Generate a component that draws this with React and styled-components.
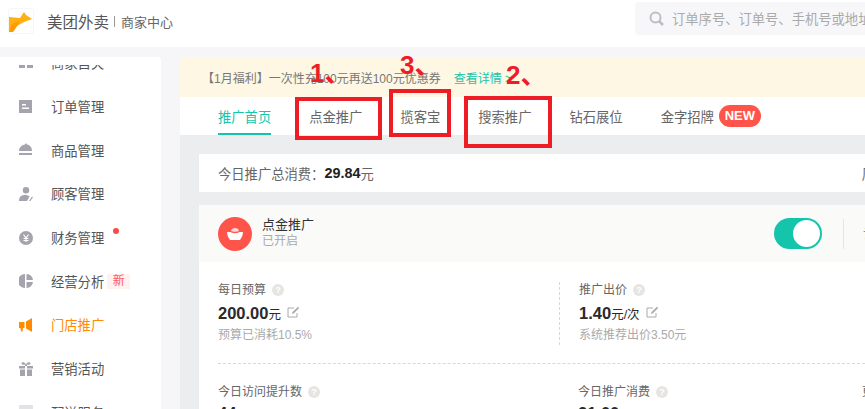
import React from 'react';
import styled, { createGlobalStyle } from 'styled-components';

const GlobalStyle = createGlobalStyle`
  html, body {
    margin: 0;
    padding: 0;
    height: 409px;
    overflow: hidden;
    background: #f6f6f8;
    font-family: "Liberation Sans", "Noto Sans CJK SC", sans-serif;
  }
`;

const Page = styled.div`
  position: relative;
  width: 865px;
  height: 409px;
  overflow: hidden;
`;

const Header = styled.header`
  display: flex;
  align-items: center;
  height: 47px;
  background: #fff;
  padding-left: 9px;
  box-sizing: border-box;
`;

const Logo = styled.div`
  width: 24px;
  height: 24px;
  margin-top: -6px;
  border-radius: 2px;
  box-shadow: 0 0 2px #ddd;
  display: flex;
`;

const Brand = styled.span`
  margin-left: 14px;
  font-size: 15.5px;
  color: #555;
  margin-top: -5px;
`;

const BrandSub = styled.span`
  margin-left: 5px;
  padding-left: 7px;
  font-size: 13px;
  color: #666;
  margin-top: -5px;
  position: relative;
  &::before {
    content: '';
    position: absolute;
    left: 0;
    top: 4px;
    height: 11px;
    border-left: 1px solid #999;
  }
`;

const Search = styled.div`
  margin-left: auto;
  width: 230px;
  height: 33px;
  margin-top: -11px;
  background: #f7f7f9;
  border-radius: 3px 0 0 3px;
  display: flex;
  align-items: center;
  padding-left: 14px;
  box-sizing: border-box;
  color: #aaa;
  font-size: 13.3px;
  white-space: nowrap;
  overflow: hidden;
  gap: 8px;
  flex-shrink: 0;
`;

const Body = styled.div`
  display: flex;
  padding-top: 10px;
`;

const Sidebar = styled.nav`
  width: 161px;
  height: 352px;
  padding-top: 8px;
  box-sizing: border-box;
  background: #fff;
  border-top-right-radius: 3px;
  flex-shrink: 0;
`;

const MenuScroll = styled.div`
  height: 100%;
  overflow: hidden;
`;

const MenuList = styled.div`
  margin-top: -24px;
  padding-left: 19px;
`;

const MenuItem = styled.div`
  display: flex;
  align-items: center;
  height: 43.7px;
  font-size: 13.3px;
  color: ${(p) => (p.$active ? '#ff8c00' : '#555')};
`;

const MenuIcon = styled.span`
  width: 14px;
  height: 14px;
  margin-right: 18px;
  display: flex;
  align-items: center;
  justify-content: center;
  color: ${(p) => (p.$active ? '#ff8c00' : '#a5a3ad')};
`;

const Dot = styled.span`
  width: 6px;
  height: 6px;
  border-radius: 50%;
  background: #fa4a4a;
  margin: -14px 0 0 9px;
`;

const NewTag = styled.span`
  margin-left: 3px;
  width: 23px;
  height: 15px;
  line-height: 15px;
  text-align: center;
  font-size: 12px;
  color: #ff5a5a;
  background: #fff1f0;
`;

const Main = styled.main`
  margin-left: 19px;
  flex: 1;
  min-width: 0;
  background: #ecedef;
`;

const Banner = styled.div`
  height: 40px;
  background: #fdf7e4;
  display: flex;
  align-items: center;
  padding-left: 22px;
  font-size: 12px;
  color: #777;
  white-space: nowrap;
`;

const BannerLink = styled.span`
  color: #14c5ab;
  margin-left: 13px;
`;

const Tabs = styled.div`
  height: 38px;
  background: #fff;
  display: flex;
  padding-left: 38px;
  gap: 38px;
  font-size: 13.3px;
  color: #666;
  white-space: nowrap;
`;

const Tab = styled.div`
  display: flex;
  align-items: center;
  height: 38px;
  box-sizing: border-box;
  color: ${(p) => (p.$active ? '#14c5ab' : '#666')};
  border-bottom: 2px solid ${(p) => (p.$active ? '#14c5ab' : 'transparent')};
  padding-top: 2px;
`;

const NewBadge = styled.span`
  margin-left: 5px;
  width: 42px;
  height: 22px;
  line-height: 22px;
  border-radius: 11px;
  background: #ff5449;
  color: #fff;
  font-size: 13px;
  font-weight: 700;
  text-align: center;
`;

const Content = styled.div`
  padding: 19px 0 0 19px;
`;

const Summary = styled.div`
  height: 38px;
  background: #fff;
  display: flex;
  align-items: center;
  padding-left: 19px;
  font-size: 13.3px;
  color: #666;
  white-space: nowrap;
`;

const SummaryValue = styled.b`
  color: #222;
  font-size: 14.4px;
`;

const SummaryExtra = styled.span`
  margin-left: 488px;
`;

const Card = styled.section`
  margin-top: 13px;
  background: #fff;
  height: 210px;
`;

const CardHead = styled.div`
  height: 57px;
  background: #fafaf8;
  display: flex;
  align-items: center;
  padding-left: 19px;
`;

const RoundIcon = styled.div`
  width: 34px;
  height: 34px;
  border-radius: 50%;
  background: #ff5449;
  display: flex;
  align-items: center;
  justify-content: center;
  flex-shrink: 0;
`;

const HeadText = styled.div`
  margin-left: 10px;
`;

const HeadTitle = styled.div`
  font-size: 13px;
  color: #333;
  line-height: 16px;
`;

const HeadState = styled.div`
  font-size: 12px;
  color: #aaa;
  line-height: 17px;
`;

const Toggle = styled.div`
  margin-left: auto;
  width: 48px;
  height: 31px;
  border-radius: 16px;
  background: #14c5ab;
  position: relative;
  flex-shrink: 0;
  &::after {
    content: '';
    position: absolute;
    right: 2px;
    top: 2px;
    width: 27px;
    height: 27px;
    border-radius: 50%;
    background: #fff;
  }
`;

const HeadAction = styled.div`
  margin-left: 21px;
  padding-left: 19px;
  height: 30px;
  line-height: 30px;
  width: 2px;
  overflow: hidden;
  border-left: 1px solid #e6e6e4;
  font-size: 13px;
  color: #14c5ab;
  white-space: nowrap;
  flex-shrink: 0;
`;

const StatRow = styled.div`
  display: flex;
  margin-left: 19px;
  padding-top: 20px;
  height: 102px;
  box-sizing: border-box;
  border-bottom: 1px dashed #d8d8d8;
`;

const Stat = styled.div`
  width: 342px;
  flex-shrink: 0;
  box-sizing: border-box;
  height: ${(p) => (p.$divided ? '63px' : 'auto')};
  margin-left: ${(p) => (p.$divided ? '-1px' : '0')};
  padding-left: ${(p) => (p.$divided ? '19px' : '0')};
  border-left: ${(p) => (p.$divided ? '1px dashed #d8d8d8' : 'none')};
`;

const StatLabel = styled.div`
  display: flex;
  align-items: center;
  font-size: 12px;
  line-height: 16px;
  color: #666;
  white-space: nowrap;
`;

const Help = styled.span`
  width: 12px;
  height: 12px;
  margin-left: 6px;
  border-radius: 50%;
  background: #e6e5e2;
  color: #fff;
  font-size: 9px;
  font-weight: 700;
  line-height: 12px;
  text-align: center;
`;

const StatValue = styled.div`
  display: flex;
  align-items: center;
  margin-top: 6px;
  height: 18px;
  font-size: 16.5px;
  font-weight: 700;
  color: #2a2a2a;
`;

const Unit = styled.span`
  font-size: 12.5px;
  font-weight: 400;
`;

const StatNote = styled.div`
  margin-top: 5px;
  font-size: 12px;
  line-height: 16px;
  color: #aaa;
`;

const EditIcon = styled.svg`
  margin-left: 6px;
  margin-top: -3px;
  color: #aaa;
`;

const MetricRow = styled.div`
  display: flex;
  padding-left: 19px;
`;

const Metric = styled.div`
  width: ${(p) => p.$w}px;
  flex-shrink: 0;
  padding-top: 20px;
`;

const MetricValue = styled.div`
  margin-top: 4px;
  font-size: 16.5px;
  font-weight: 700;
  color: #2a2a2a;
`;

const RedBox = styled.div`
  position: absolute;
  left: ${(p) => p.$x}px;
  top: ${(p) => p.$y}px;
  width: ${(p) => p.$w}px;
  height: ${(p) => p.$h}px;
  box-sizing: border-box;
  border: 4px solid #ee1c25;
`;

const Mark = styled.div`
  position: absolute;
  left: ${(p) => p.$x}px;
  top: ${(p) => p.$y}px;
  color: #ee1c25;
  font-size: 26px;
  line-height: 26px;
  font-weight: 700;
  white-space: nowrap;
`;

const Edit = () => (
  <EditIcon width="13" height="12" viewBox="0 0 13 12" fill="none" stroke="currentColor" strokeWidth="1">
    <path d="M10 7v4H1V2h6" />
    <path d="M5 8l.5-2L11 .8l1.2 1.2L7 7.2z" fill="currentColor" stroke="none" />
  </EditIcon>
);

const menu = [
  {
    name: '商家自夹',
    icon: <path d="M0 0h6v5H0zM8 0h6v5H8zM0 7h6v5H0zM8 7h6v5H8z" fill="currentColor" />,
  },
  {
    name: '订单管理',
    icon: <path fillRule="evenodd" d="M0 0h13v13H0zM3 4v1.500h4V4zM3 7.500V9h7V7.500z" fill="currentColor" />,
  },
  {
    name: '商品管理',
    icon: <path d="M6 1.500a1 1 0 0 1 2 0C11 2 13 4.500 13 8H0C0 4.500 3 2 6 1.500zM0 10h13v2H0z" fill="currentColor" />,
  },
  {
    name: '顾客管理',
    icon: <path d="M7 0a3 3 0 1 1 0 6.500A3 3 0 0 1 7 0zM0 14c0-4 2-6 6-6 2 0 3.500.5 4.500 1.500L8 14zM10 14l3-4.500 1 .8-3 4.200z" fill="currentColor" />,
  },
  {
    name: '财务管理',
    dot: true,
    icon: (
      <>
        <circle cx="7" cy="7" r="7" fill="currentColor" />
        <path d="M4.500 3.500L7 7l2.500-3.500M4.500 7.500h5M4.500 9.500h5M7 7v4" stroke="#fff" strokeWidth="1.200" fill="none" />
      </>
    ),
  },
  {
    name: '经营分析',
    tag: true,
    icon: <path d="M6 0v14A7 7 0 0 1 6 0zM7.500 0A7 7 0 0 1 14 6H7.500zM7.500 8H14a7 7 0 0 1-6.500 6z" fill="currentColor" />,
  },
  {
    name: '门店推广',
    active: true,
    icon: <path d="M13 0v14L7 10.500V3.500zM0 4h5.500v6H4l-.5 3.500H2L1.500 10H0z" fill="currentColor" />,
  },
  {
    name: '营销活动',
    icon: <path d="M0 4h6V2.500C5 3 2.500 3 2.500 1.500 2.500 0 5.500-.5 7 2.500 8.500-.5 11.500 0 11.500 1.500 11.500 3 9 3 8 2.500V4h6v2.500H8V4H6v2.500H0zM1 7.500h5V14H1zM8 7.500h5V14H8z" fill="currentColor" />,
  },
  {
    name: '配送服务',
    icon: <path d="M0 0h14v14H0z" fill="#e3e3e6" />,
  },
];

const tabs = ['点金推广', '揽客宝', '搜索推广', '钻石展位'];

export default function App() {
  return (
    <Page>
      <GlobalStyle />
      <Header>
        <Logo>
          <svg width="24" height="24" viewBox="0 0 24 24">
            <path d="M0 8l11 1 4-6 2 3 6 4-8 3-7 4-4 6H0z" fill="#ffb013" />
            <path d="M0 23l3-8 8-3-3 5-4 6z" fill="#ff9a00" />
          </svg>
        </Logo>
        <Brand>美团外卖</Brand>
        <BrandSub>商家中心</BrandSub>
        <Search>
          <svg width="15" height="15" viewBox="0 0 15 15" fill="none" stroke="#bdbdc6" strokeWidth="2" style={{ flexShrink: 0 }}>
            <circle cx="6.500" cy="6.500" r="5" />
            <path d="M10 10l4 4" strokeWidth="2.500" />
          </svg>
          订单序号、订单号、手机号或地址
        </Search>
      </Header>
      <Body>
        <Sidebar>
          <MenuScroll>
            <MenuList>
              {menu.map((m) => (
                <MenuItem key={m.name} $active={m.active}>
                  <MenuIcon $active={m.active}>
                    <svg width="14" height="14" viewBox="0 0 14 14">{m.icon}</svg>
                  </MenuIcon>
                  {m.name}
                  {m.dot && <Dot />}
                  {m.tag && <NewTag>新</NewTag>}
                </MenuItem>
              ))}
            </MenuList>
          </MenuScroll>
        </Sidebar>
        <Main>
          <Banner>
            【1月福利】一次性充100元再送100元优惠券
            <BannerLink>查看详情 &gt;</BannerLink>
          </Banner>
          <Tabs>
            <Tab $active>推广首页</Tab>
            {tabs.map((t) => (
              <Tab key={t}>{t}</Tab>
            ))}
            <Tab>
              金字招牌
              <NewBadge>NEW</NewBadge>
            </Tab>
          </Tabs>
          <Content>
            <Summary>
              今日推广总消费：<SummaryValue>29.84</SummaryValue>元
              <SummaryExtra>周</SummaryExtra>
            </Summary>
            <Card>
              <CardHead>
                <RoundIcon>
                  <svg width="16" height="12" viewBox="0 0 16 12">
                    <path d="M0 4h3.500c1 1.500 8 1.500 9 0H16c0 3-1.500 6-3 8H3C1.500 10 0 7 0 4z" fill="#fff" />
                    <path d="M4 3c.5-4 7.500-4 8 0-2 1-6 1-8 0z" fill="#ffd9d6" />
                  </svg>
                </RoundIcon>
                <HeadText>
                  <HeadTitle>点金推广</HeadTitle>
                  <HeadState>已开启</HeadState>
                </HeadText>
                <Toggle />
                <HeadAction>设置</HeadAction>
              </CardHead>
              <StatRow>
                <Stat>
                  <StatLabel>
                    每日预算<Help>?</Help>
                  </StatLabel>
                  <StatValue>
                    200.00<Unit>元</Unit>
                    <Edit />
                  </StatValue>
                  <StatNote>预算已消耗10.5%</StatNote>
                </Stat>
                <Stat $divided>
                  <StatLabel>
                    推广出价<Help>?</Help>
                  </StatLabel>
                  <StatValue>
                    1.40<Unit>元/次</Unit>
                    <Edit />
                  </StatValue>
                  <StatNote>系统推荐出价3.50元</StatNote>
                </Stat>
              </StatRow>
              <MetricRow>
                <Metric $w={360}>
                  <StatLabel>
                    今日访问提升数<Help>?</Help>
                  </StatLabel>
                  <MetricValue>44</MetricValue>
                </Metric>
                <Metric $w={284}>
                  <StatLabel>
                    今日推广消费<Help>?</Help>
                  </StatLabel>
                  <MetricValue>21.00</MetricValue>
                </Metric>
                <Metric $w={60}>
                  <StatLabel>更多</StatLabel>
                </Metric>
              </MetricRow>
            </Card>
          </Content>
        </Main>
      </Body>
      <RedBox $x={295} $y={97} $w={87} $h={43} />
      <RedBox $x={389} $y={89} $w={62} $h={48} />
      <RedBox $x={464} $y={96} $w={88} $h={52} />
      <Mark $x={310} $y={60}>1、</Mark>
      <Mark $x={400} $y={52}>3、</Mark>
      <Mark $x={506} $y={62}>2、</Mark>
    </Page>
  );
}
